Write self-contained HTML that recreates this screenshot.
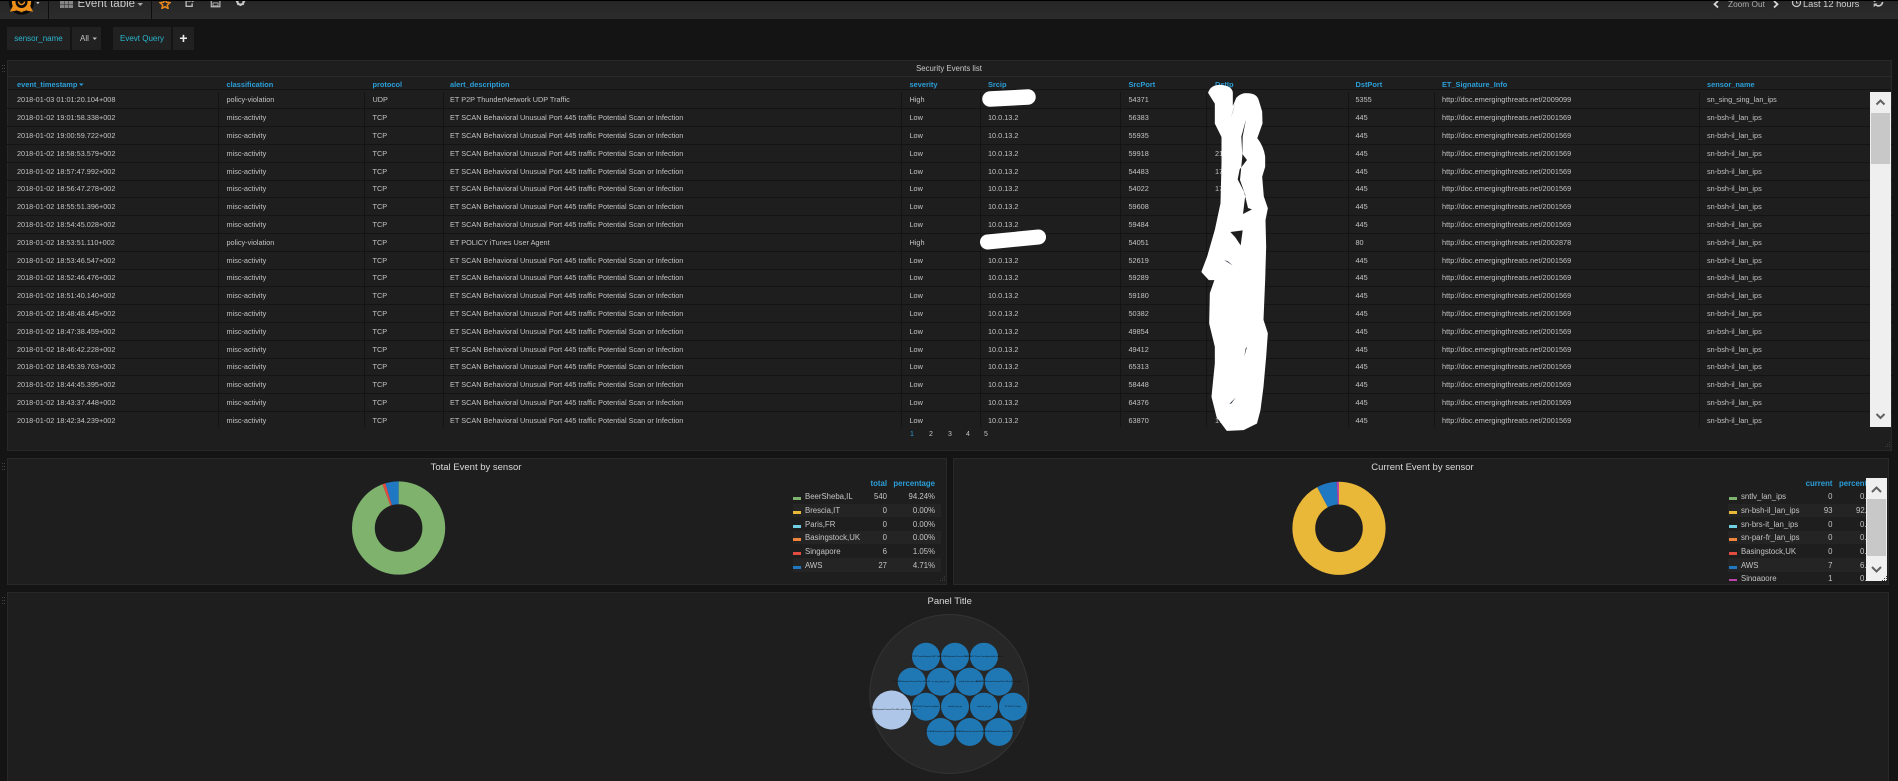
<!DOCTYPE html>
<html><head><meta charset="utf-8"><title>Event table</title>
<style>
html,body{margin:0;padding:0;background:#141414;width:1898px;height:781px;overflow:hidden}
body{position:relative;font-family:"Liberation Sans",sans-serif;color:#c4c4c4}
.a{position:absolute;white-space:nowrap}
.nav{position:absolute;left:0;top:1px;width:1898px;height:18px;background:linear-gradient(#262626,#2c2c2c);overflow:hidden}
.sep{position:absolute;top:0;width:1px;height:19px;background:#0d0d0d}
.btn{position:absolute;top:27px;height:23px;line-height:24px;background:#212121;text-align:center;font-size:8px;color:#2ab7d0}
.panel{position:absolute;background:#1f1e1f;border:1px solid #282828;box-sizing:border-box}
.r{position:absolute;left:0;width:1898px;height:18px;line-height:18px;border-bottom:1px solid #141414;font-size:7.3px;color:#c4c4c4}
.h{position:absolute;top:80px;line-height:10px;font-size:7.4px;font-weight:bold;color:#2a9fd8;white-space:nowrap}
.r span{position:absolute;top:1px;white-space:nowrap}
.c1{left:17px}.c2{left:226.5px}.c3{left:372.5px}.c4{left:450px}.c5{left:909.5px}.c6{left:988px}.c7{left:1128.5px}.c8{left:1215px}.c9{left:1355.5px}.c10{left:1442px;letter-spacing:.05px}.c11{left:1707px}
.v{position:absolute;top:92px;width:1px;height:335px;background:#141414}
.title{position:absolute;font-size:9.5px;color:#d8d9da;white-space:nowrap;transform:translateX(-50%);line-height:12px}
.lg{position:absolute;height:13px;line-height:13px;font-size:7.8px;color:#c4c4c4;white-space:nowrap}
.sw{position:absolute;width:8px;height:2.5px}
.lh{position:absolute;font-size:7.8px;font-weight:bold;color:#2a9fd8;line-height:10px;white-space:nowrap}
.pg{position:absolute;top:429px;font-size:7px;line-height:12px;color:#c4c4c4}
</style></head>
<body>
<div class="a" style="left:0;top:0;width:1898px;height:1px;background:#000"></div>

<div class="nav">
  <svg class="a" style="left:0;top:-1px" width="48" height="19" viewBox="0 0 48 19">
    <circle cx="21.500" cy="2" r="12.700" fill="#0a0a0a"/>
    <circle cx="21.500" cy="2" r="7.800" fill="none" stroke="#ee8f1a" stroke-width="3.600"/>
    <path d="M13 7.500l-1.500 3 3.500-.5zM30 7.500l1.500 3-3.500-.5zM21.500 9.500v2.700" stroke="#ee8f1a" stroke-width="1.800" fill="#ee8f1a"/>
    <path d="M18.500 1.500a3 3 0 0 0 6 0" fill="none" stroke="#ee8f1a" stroke-width="1.400"/>
    <path d="M36.200 2h3.400l-1.700 2.200z" fill="#c8c8c8"/>
  </svg>
  <div class="sep" style="left:48px"></div>
  <svg class="a" style="left:59px;top:-1px" width="15" height="10" viewBox="0 0 15 10"><g fill="#858585"><rect x="1" y="1" width="4" height="3"/><rect x="5.500" y="1" width="4" height="3"/><rect x="10" y="1" width="4" height="3"/><rect x="1" y="4.500" width="4" height="3.500"/><rect x="5.500" y="4.500" width="4" height="3.500"/><rect x="10" y="4.500" width="4" height="3.500"/></g></svg>
  <div class="a" style="left:77.500px;top:-6px;font-size:11.500px;line-height:18px;color:#c8c8c8">Event table</div>
  <svg class="a" style="left:137px;top:1px" width="7" height="5"><path d="M.5 1h5.500l-2.750 3z" fill="#a8a8a8"/></svg>
  <div class="sep" style="left:151px"></div>
  <svg class="a" style="left:159px;top:-3px" width="12" height="11" viewBox="0 0 14 12"><path d="M7 .8l1.700 3.800 4.100.4-3.100 2.800.9 4-3.600-2.100-3.600 2.100.9-4L1.200 5l4.100-.4z" fill="none" stroke="#e8871e" stroke-width="1.800"/></svg>
  <svg class="a" style="left:184px;top:-4px" width="12" height="11" viewBox="0 0 14 12"><path d="M9 4H2.500v6.500h7V7" fill="none" stroke="#b9b9b9" stroke-width="1.600"/><path d="M5.500 6c.3-2.500 2-3.500 4-3.500V.8L13 3.500 9.500 6V4.400C7.800 4.400 6.500 4.800 5.500 6z" fill="#b9b9b9"/></svg>
  <svg class="a" style="left:210px;top:-4px" width="11" height="11" viewBox="0 0 13 12"><path d="M1.500 1h9l1.200 1.200v8.800h-10.200z" fill="none" stroke="#b9b9b9" stroke-width="1.400"/><rect x="3.700" y="1" width="5" height="2.800" fill="#b9b9b9"/><rect x="3.500" y="6.500" width="6" height="3.500" fill="none" stroke="#b9b9b9"/></svg>
  <svg class="a" style="left:235px;top:-4px" width="11" height="11" viewBox="0 0 12 12"><circle cx="6" cy="5" r="3.300" fill="none" stroke="#c9c9c9" stroke-width="2.400"/><path d="M6 .2v1.500M6 8.300v1.500M1 5h1.500M9.500 5H11M2.500 1.500l1 1M8.500 7.500l1 1M9.500 1.500l-1 1M3.500 7.500l-1 1" stroke="#c9c9c9" stroke-width="1.500"/></svg>

  <svg class="a" style="left:1712px;top:-1px" width="8" height="9"><path d="M6 1L2.500 4.200 6 7.500" fill="none" stroke="#d8d8d8" stroke-width="1.800"/></svg>
  <div class="a" style="left:1728px;top:-6px;font-size:8.300px;line-height:18px;color:#adadad">Zoom Out</div>
  <svg class="a" style="left:1772px;top:-1px" width="8" height="9"><path d="M2 1l3.500 3.200L2 7.500" fill="none" stroke="#d8d8d8" stroke-width="1.800"/></svg>
  <svg class="a" style="left:1791px;top:-4px" width="11" height="11" viewBox="0 0 11 11"><circle cx="5.500" cy="5.500" r="4" fill="none" stroke="#c4c4c4" stroke-width="1.300"/><path d="M5.500 3v3h2" fill="none" stroke="#c4c4c4"/></svg>
  <div class="a" style="left:1803px;top:-6px;font-size:9.300px;line-height:18px;color:#cfcfcf">Last 12 hours</div>
  <svg class="a" style="left:1873px;top:-5px" width="11" height="12" viewBox="0 0 11 12"><path d="M1.500 6a4 4 0 0 1 7-2.500M9.500 6a4 4 0 0 1-7 2.500" fill="none" stroke="#c6c6c6" stroke-width="1.700"/><path d="M6.500 4.500h3.800V.8zM4.500 7.500H.7v3.700z" fill="#c6c6c6"/></svg>
</div>

<div class="btn" style="left:7px;width:63px">sensor_name</div>
<div class="btn" style="left:72px;width:29px;color:#c6c6c6;text-align:left;text-indent:8px">All<svg style="position:absolute;left:20px;top:10px" width="6" height="4"><path d="M.5 .5h4.500l-2.250 2.500z" fill="#bbb"/></svg></div>
<div class="btn" style="left:113px;width:58px">Evevt Query</div>
<div class="btn" style="left:173px;width:21px;color:#eee;font-size:14px;font-weight:bold;line-height:22px">+</div>

<svg class="a" style="left:2px;top:65px" width="5" height="9"><g fill="#444"><rect x="0" y="0" width="1" height="1"/><rect x="2" y="0" width="1" height="1"/><rect x="0" y="3" width="1" height="1"/><rect x="2" y="3" width="1" height="1"/><rect x="0" y="6" width="1" height="1"/><rect x="2" y="6" width="1" height="1"/></g></svg>

<!-- security events panel -->
<div class="panel" style="left:7px;top:60px;width:1885px;height:391px"></div>
<div class="a" style="left:8px;top:76px;width:1883px;height:1px;background:#292929"></div>
<div class="a" style="left:8px;top:89px;width:1883px;height:1px;background:#141414"></div>
<div class="a" style="left:0;top:63px;width:1898px;text-align:center;font-size:7.800px;line-height:12px;color:#c9c9c9">Security Events list</div>

<div class="h" style="left:17px">event_timestamp<svg style="margin-left:2px" width="5" height="4"><path d="M0 .5h4.500l-2.250 2.500z" fill="#2a9fd8"/></svg></div>
<div class="h" style="left:226.500px">classification</div>
<div class="h" style="left:372.500px">protocol</div>
<div class="h" style="left:450px">alert_description</div>
<div class="h" style="left:909.500px">severity</div>
<div class="h" style="left:988px">Srcip</div>
<div class="h" style="left:1128.500px">SrcPort</div>
<div class="h" style="left:1215px">DstIp</div>
<div class="h" style="left:1355.500px">DstPort</div>
<div class="h" style="left:1442px">ET_Signature_Info</div>
<div class="h" style="left:1707px">sensor_name</div>

<div class="r" style="top:90px"><span class="c1">2018-01-03 01:01:20.104+008</span><span class="c2">policy-violation</span><span class="c3">UDP</span><span class="c4">ET P2P ThunderNetwork UDP Traffic</span><span class="c5">High</span><span class="c7">54371</span><span class="c9">5355</span><span class="c10">http://doc.emergingthreats.net/2009099</span><span class="c11">sn_sing_sing_lan_ips</span></div>
<div class="r" style="top:108px"><span class="c1">2018-01-02 19:01:58.338+002</span><span class="c2">misc-activity</span><span class="c3">TCP</span><span class="c4">ET SCAN Behavioral Unusual Port 445 traffic Potential Scan or Infection</span><span class="c5">Low</span><span class="c6">10.0.13.2</span><span class="c7">56383</span><span class="c9">445</span><span class="c10">http://doc.emergingthreats.net/2001569</span><span class="c11">sn-bsh-il_lan_ips</span></div>
<div class="r" style="top:126px"><span class="c1">2018-01-02 19:00:59.722+002</span><span class="c2">misc-activity</span><span class="c3">TCP</span><span class="c4">ET SCAN Behavioral Unusual Port 445 traffic Potential Scan or Infection</span><span class="c5">Low</span><span class="c6">10.0.13.2</span><span class="c7">55935</span><span class="c9">445</span><span class="c10">http://doc.emergingthreats.net/2001569</span><span class="c11">sn-bsh-il_lan_ips</span></div>
<div class="r" style="top:144px"><span class="c1">2018-01-02 18:58:53.579+002</span><span class="c2">misc-activity</span><span class="c3">TCP</span><span class="c4">ET SCAN Behavioral Unusual Port 445 traffic Potential Scan or Infection</span><span class="c5">Low</span><span class="c6">10.0.13.2</span><span class="c7">59918</span><span class="c8">21</span><span class="c9">445</span><span class="c10">http://doc.emergingthreats.net/2001569</span><span class="c11">sn-bsh-il_lan_ips</span></div>
<div class="r" style="top:162px"><span class="c1">2018-01-02 18:57:47.992+002</span><span class="c2">misc-activity</span><span class="c3">TCP</span><span class="c4">ET SCAN Behavioral Unusual Port 445 traffic Potential Scan or Infection</span><span class="c5">Low</span><span class="c6">10.0.13.2</span><span class="c7">54483</span><span class="c8">17</span><span class="c9">445</span><span class="c10">http://doc.emergingthreats.net/2001569</span><span class="c11">sn-bsh-il_lan_ips</span></div>
<div class="r" style="top:179px"><span class="c1">2018-01-02 18:56:47.278+002</span><span class="c2">misc-activity</span><span class="c3">TCP</span><span class="c4">ET SCAN Behavioral Unusual Port 445 traffic Potential Scan or Infection</span><span class="c5">Low</span><span class="c6">10.0.13.2</span><span class="c7">54022</span><span class="c8">17</span><span class="c9">445</span><span class="c10">http://doc.emergingthreats.net/2001569</span><span class="c11">sn-bsh-il_lan_ips</span></div>
<div class="r" style="top:197px"><span class="c1">2018-01-02 18:55:51.396+002</span><span class="c2">misc-activity</span><span class="c3">TCP</span><span class="c4">ET SCAN Behavioral Unusual Port 445 traffic Potential Scan or Infection</span><span class="c5">Low</span><span class="c6">10.0.13.2</span><span class="c7">59608</span><span class="c9">445</span><span class="c10">http://doc.emergingthreats.net/2001569</span><span class="c11">sn-bsh-il_lan_ips</span></div>
<div class="r" style="top:215px"><span class="c1">2018-01-02 18:54:45.028+002</span><span class="c2">misc-activity</span><span class="c3">TCP</span><span class="c4">ET SCAN Behavioral Unusual Port 445 traffic Potential Scan or Infection</span><span class="c5">Low</span><span class="c6">10.0.13.2</span><span class="c7">59484</span><span class="c9">445</span><span class="c10">http://doc.emergingthreats.net/2001569</span><span class="c11">sn-bsh-il_lan_ips</span></div>
<div class="r" style="top:233px"><span class="c1">2018-01-02 18:53:51.110+002</span><span class="c2">policy-violation</span><span class="c3">TCP</span><span class="c4">ET POLICY iTunes User Agent</span><span class="c5">High</span><span class="c7">54051</span><span class="c9">80</span><span class="c10">http://doc.emergingthreats.net/2002878</span><span class="c11">sn-bsh-il_lan_ips</span></div>
<div class="r" style="top:251px"><span class="c1">2018-01-02 18:53:46.547+002</span><span class="c2">misc-activity</span><span class="c3">TCP</span><span class="c4">ET SCAN Behavioral Unusual Port 445 traffic Potential Scan or Infection</span><span class="c5">Low</span><span class="c6">10.0.13.2</span><span class="c7">52619</span><span class="c9">445</span><span class="c10">http://doc.emergingthreats.net/2001569</span><span class="c11">sn-bsh-il_lan_ips</span></div>
<div class="r" style="top:268px"><span class="c1">2018-01-02 18:52:46.476+002</span><span class="c2">misc-activity</span><span class="c3">TCP</span><span class="c4">ET SCAN Behavioral Unusual Port 445 traffic Potential Scan or Infection</span><span class="c5">Low</span><span class="c6">10.0.13.2</span><span class="c7">59289</span><span class="c9">445</span><span class="c10">http://doc.emergingthreats.net/2001569</span><span class="c11">sn-bsh-il_lan_ips</span></div>
<div class="r" style="top:286px"><span class="c1">2018-01-02 18:51:40.140+002</span><span class="c2">misc-activity</span><span class="c3">TCP</span><span class="c4">ET SCAN Behavioral Unusual Port 445 traffic Potential Scan or Infection</span><span class="c5">Low</span><span class="c6">10.0.13.2</span><span class="c7">59180</span><span class="c9">445</span><span class="c10">http://doc.emergingthreats.net/2001569</span><span class="c11">sn-bsh-il_lan_ips</span></div>
<div class="r" style="top:304px"><span class="c1">2018-01-02 18:48:48.445+002</span><span class="c2">misc-activity</span><span class="c3">TCP</span><span class="c4">ET SCAN Behavioral Unusual Port 445 traffic Potential Scan or Infection</span><span class="c5">Low</span><span class="c6">10.0.13.2</span><span class="c7">50382</span><span class="c9">445</span><span class="c10">http://doc.emergingthreats.net/2001569</span><span class="c11">sn-bsh-il_lan_ips</span></div>
<div class="r" style="top:322px"><span class="c1">2018-01-02 18:47:38.459+002</span><span class="c2">misc-activity</span><span class="c3">TCP</span><span class="c4">ET SCAN Behavioral Unusual Port 445 traffic Potential Scan or Infection</span><span class="c5">Low</span><span class="c6">10.0.13.2</span><span class="c7">49854</span><span class="c9">445</span><span class="c10">http://doc.emergingthreats.net/2001569</span><span class="c11">sn-bsh-il_lan_ips</span></div>
<div class="r" style="top:340px"><span class="c1">2018-01-02 18:46:42.228+002</span><span class="c2">misc-activity</span><span class="c3">TCP</span><span class="c4">ET SCAN Behavioral Unusual Port 445 traffic Potential Scan or Infection</span><span class="c5">Low</span><span class="c6">10.0.13.2</span><span class="c7">49412</span><span class="c9">445</span><span class="c10">http://doc.emergingthreats.net/2001569</span><span class="c11">sn-bsh-il_lan_ips</span></div>
<div class="r" style="top:357px"><span class="c1">2018-01-02 18:45:39.763+002</span><span class="c2">misc-activity</span><span class="c3">TCP</span><span class="c4">ET SCAN Behavioral Unusual Port 445 traffic Potential Scan or Infection</span><span class="c5">Low</span><span class="c6">10.0.13.2</span><span class="c7">65313</span><span class="c9">445</span><span class="c10">http://doc.emergingthreats.net/2001569</span><span class="c11">sn-bsh-il_lan_ips</span></div>
<div class="r" style="top:375px"><span class="c1">2018-01-02 18:44:45.395+002</span><span class="c2">misc-activity</span><span class="c3">TCP</span><span class="c4">ET SCAN Behavioral Unusual Port 445 traffic Potential Scan or Infection</span><span class="c5">Low</span><span class="c6">10.0.13.2</span><span class="c7">58448</span><span class="c9">445</span><span class="c10">http://doc.emergingthreats.net/2001569</span><span class="c11">sn-bsh-il_lan_ips</span></div>
<div class="r" style="top:393px"><span class="c1">2018-01-02 18:43:37.448+002</span><span class="c2">misc-activity</span><span class="c3">TCP</span><span class="c4">ET SCAN Behavioral Unusual Port 445 traffic Potential Scan or Infection</span><span class="c5">Low</span><span class="c6">10.0.13.2</span><span class="c7">64376</span><span class="c9">445</span><span class="c10">http://doc.emergingthreats.net/2001569</span><span class="c11">sn-bsh-il_lan_ips</span></div>
<div class="r" style="top:411px;border-bottom:none"><span class="c1">2018-01-02 18:42:34.239+002</span><span class="c2">misc-activity</span><span class="c3">TCP</span><span class="c4">ET SCAN Behavioral Unusual Port 445 traffic Potential Scan or Infection</span><span class="c5">Low</span><span class="c6">10.0.13.2</span><span class="c7">63870</span><span class="c8">17</span><span class="c9">445</span><span class="c10">http://doc.emergingthreats.net/2001569</span><span class="c11">sn-bsh-il_lan_ips</span></div>

<div class="v" style="left:218px"></div><div class="v" style="left:364px"></div><div class="v" style="left:443px"></div><div class="v" style="left:901px"></div><div class="v" style="left:980px"></div><div class="v" style="left:1120px"></div><div class="v" style="left:1206px"></div><div class="v" style="left:1348px"></div><div class="v" style="left:1434px"></div><div class="v" style="left:1699px"></div>

<div class="pg" style="left:910px;color:#2a9fd8">1</div><div class="pg" style="left:929px">2</div><div class="pg" style="left:948px">3</div><div class="pg" style="left:966px">4</div><div class="pg" style="left:984px">5</div>

<!-- table scrollbar -->
<svg class="a" style="left:1870px;top:92px" width="21" height="335" viewBox="0 0 21 335">
  <rect width="21" height="335" fill="#efefef"/>
  <rect x="1" y="21" width="19" height="51" fill="#c8c8c8"/>
  <path d="M6.500 12.500l4-4 4 4" fill="none" stroke="#606060" stroke-width="2"/>
  <path d="M6.500 322l4 4 4-4" fill="none" stroke="#606060" stroke-width="2"/>
</svg>

<!-- redaction scribbles -->
<svg class="a" style="left:0;top:0" width="1898" height="781" viewBox="0 0 1898 781">
  <path d="M990 99L1028 97" fill="none" stroke="#fff" stroke-width="15.500" stroke-linecap="round"/>
  <path d="M987.500 242L1038.500 237" fill="none" stroke="#fff" stroke-width="15" stroke-linecap="round"/>
  <g transform="translate(1100 80) scale(.33333)">
    <path d="M328 38Q335 18 360 18Q393 20 395 38L395 95L412 55Q425 42 440 43Q468 43 473 62L483 95L484 130L468 175Q488 200 492 230L492 260L483 290L488 350L500 385L493 420L495 500L492 600L487 720L500 760L495 830L487 920L478 990L468 1028L430 1047L382 1049L353 1010L338 950L348 850L348 800L331 730L333 640L348 597L328 597L308 575L325 530L348 450L365 370L368 250L368 170L348 130L348 70Z" fill="#fff" stroke="#fff" stroke-width="7" stroke-linejoin="round"/>
    <path d="M407 66L393 112L399 94Z" fill="#1f1e1f"/>
    <path d="M438 118L428 170L427 222L441 240L419 268L413 298L432 335L444 384L456 388L429 402L436 345L420 300L427 228L424 170Z" fill="#1f1e1f"/>
    <path d="M391 456L428 451L422 496L406 472Z" fill="#1f1e1f"/>
    <path d="M372 540L398 556L384 544Z" fill="#334"/>
    <path d="M441 800L433 830L437 806Z" fill="#1f1e1f"/>
    <path d="M407 953L388 972L394 970Z" fill="#123"/>
  </g>
</svg>

<!-- total event panel -->
<svg class="a" style="left:2px;top:463px" width="5" height="9"><g fill="#444"><rect x="0" y="0" width="1" height="1"/><rect x="2" y="0" width="1" height="1"/><rect x="0" y="3" width="1" height="1"/><rect x="2" y="3" width="1" height="1"/><rect x="0" y="6" width="1" height="1"/><rect x="2" y="6" width="1" height="1"/></g></svg>
<div class="panel" style="left:7px;top:458px;width:940px;height:127px"></div>
<div class="title" style="left:476px;top:462px">Total Event by sensor</div>
<svg class="a" style="left:340px;top:470px" width="118" height="116" viewBox="0 0 118 116">
  <g transform="rotate(-90 58.600 58)" fill="none" stroke-width="22.800">
    <circle cx="58.600" cy="58" r="35.200" stroke="#7eb26d" stroke-dasharray="208.400 300"/>
    <circle cx="58.600" cy="58" r="35.200" stroke="#e24d42" stroke-dasharray="2.320 300" stroke-dashoffset="-208.400"/>
    <circle cx="58.600" cy="58" r="35.200" stroke="#1f78c1" stroke-dasharray="10.420 300" stroke-dashoffset="-210.720"/>
  </g>
</svg>
<div class="lh" style="right:1011px;top:479px">total</div>
<div class="lh" style="right:963px;top:479px">percentage</div>
<div class="a" style="left:793px;top:504px;width:148px;height:13px;background:#242424"></div>
<div class="a" style="left:793px;top:531px;width:148px;height:13px;background:#242424"></div>
<div class="a" style="left:793px;top:558px;width:148px;height:14px;background:#242424"></div>
<div class="sw" style="left:793px;top:497px;background:#7eb26d"></div><div class="lg" style="left:805px;top:490px">BeerSheba,IL</div><div class="lg" style="right:1011px;top:490px">540</div><div class="lg" style="right:963px;top:490px">94.24%</div>
<div class="sw" style="left:793px;top:511px;background:#eab839"></div><div class="lg" style="left:805px;top:504px">Brescia,IT</div><div class="lg" style="right:1011px;top:504px">0</div><div class="lg" style="right:963px;top:504px">0.00%</div>
<div class="sw" style="left:793px;top:525px;background:#6ed0e0"></div><div class="lg" style="left:805px;top:518px">Paris,FR</div><div class="lg" style="right:1011px;top:518px">0</div><div class="lg" style="right:963px;top:518px">0.00%</div>
<div class="sw" style="left:793px;top:538px;background:#ef843c"></div><div class="lg" style="left:805px;top:531px">Basingstock,UK</div><div class="lg" style="right:1011px;top:531px">0</div><div class="lg" style="right:963px;top:531px">0.00%</div>
<div class="sw" style="left:793px;top:552px;background:#e24d42"></div><div class="lg" style="left:805px;top:545px">Singapore</div><div class="lg" style="right:1011px;top:545px">6</div><div class="lg" style="right:963px;top:545px">1.05%</div>
<div class="sw" style="left:793px;top:566px;background:#1f78c1"></div><div class="lg" style="left:805px;top:559px">AWS</div><div class="lg" style="right:1011px;top:559px">27</div><div class="lg" style="right:963px;top:559px">4.71%</div>

<!-- current event panel -->
<div class="panel" style="left:953px;top:458px;width:936px;height:127px"></div>
<div class="title" style="left:1422.500px;top:462px">Current Event by sensor</div>
<svg class="a" style="left:1280px;top:470px" width="118" height="116" viewBox="0 0 118 116">
  <g transform="rotate(-90 59 58.300)" fill="none" stroke-width="22.800">
    <circle cx="59" cy="58.300" r="35.200" stroke="#eab839" stroke-dasharray="203.650 300"/>
    <circle cx="59" cy="58.300" r="35.200" stroke="#1f78c1" stroke-dasharray="15.330 300" stroke-dashoffset="-203.650"/>
    <circle cx="59" cy="58.300" r="35.200" stroke="#ba43a9" stroke-dasharray="2.190 300" stroke-dashoffset="-218.980"/>
  </g>
</svg>
<div class="a" style="left:1725px;top:478px;width:141px;height:103px;overflow:hidden">
  <div class="lh" style="right:33.500px;top:1px">current</div>
  <div class="lh" style="left:114px;top:1px">percentage</div>
  <div class="a" style="left:3px;top:26px;width:138px;height:13px;background:#242424"></div>
  <div class="a" style="left:3px;top:53px;width:138px;height:13px;background:#242424"></div>
  <div class="a" style="left:3px;top:80px;width:138px;height:14px;background:#242424"></div>
  <div class="sw" style="left:3.500px;top:19px;background:#7eb26d"></div><div class="lg" style="left:16px;top:12px">sntlv_lan_ips</div><div class="lg" style="right:33.500px;top:12px">0</div><div class="lg" style="left:135px;top:12px">0.00%</div>
  <div class="sw" style="left:3.500px;top:33px;background:#eab839"></div><div class="lg" style="left:16px;top:26px">sn-bsh-il_lan_ips</div><div class="lg" style="right:33.500px;top:26px">93</div><div class="lg" style="left:131px;top:26px">92.08%</div>
  <div class="sw" style="left:3.500px;top:47px;background:#6ed0e0"></div><div class="lg" style="left:16px;top:40px">sn-brs-it_lan_ips</div><div class="lg" style="right:33.500px;top:40px">0</div><div class="lg" style="left:135px;top:40px">0.00%</div>
  <div class="sw" style="left:3.500px;top:60px;background:#ef843c"></div><div class="lg" style="left:16px;top:53px">sn-par-fr_lan_ips</div><div class="lg" style="right:33.500px;top:53px">0</div><div class="lg" style="left:135px;top:53px">0.00%</div>
  <div class="sw" style="left:3.500px;top:74px;background:#e24d42"></div><div class="lg" style="left:16px;top:67px">Basingstock,UK</div><div class="lg" style="right:33.500px;top:67px">0</div><div class="lg" style="left:135px;top:67px">0.00%</div>
  <div class="sw" style="left:3.500px;top:88px;background:#1f78c1"></div><div class="lg" style="left:16px;top:81px">AWS</div><div class="lg" style="right:33.500px;top:81px">7</div><div class="lg" style="left:135px;top:81px">6.93%</div>
  <div class="sw" style="left:3.500px;top:101px;background:#ba43a9"></div><div class="lg" style="left:16px;top:94px">Singapore</div><div class="lg" style="right:33.500px;top:94px">1</div><div class="lg" style="left:135px;top:94px">0.99%</div>
</div>
<svg class="a" style="left:1866px;top:478px" width="21" height="103" viewBox="0 0 21 103">
  <rect width="21" height="103" fill="#efefef"/>
  <rect x="1" y="21" width="19" height="57" fill="#c8c8c8"/>
  <path d="M6 14l4.500-4.500 4.500 4.500" fill="none" stroke="#606060" stroke-width="2"/>
  <path d="M6 89l4.500 4.500 4.500-4.500" fill="none" stroke="#606060" stroke-width="2"/>
</svg>

<!-- panel title -->
<svg class="a" style="left:2px;top:597px" width="5" height="9"><g fill="#444"><rect x="0" y="0" width="1" height="1"/><rect x="2" y="0" width="1" height="1"/><rect x="0" y="3" width="1" height="1"/><rect x="2" y="3" width="1" height="1"/><rect x="0" y="6" width="1" height="1"/><rect x="2" y="6" width="1" height="1"/></g></svg>
<div class="panel" style="left:7px;top:592px;width:1882px;height:195px"></div>
<div class="title" style="left:949.700px;top:596px">Panel Title</div>
<svg class="a" style="left:840px;top:590px" width="220" height="191" viewBox="840 590 220 191">
  <circle cx="949.300" cy="694" r="79.500" fill="#272727" stroke="#343434"/>
  <g fill="#1f77b4">
    <circle cx="926" cy="656.700" r="14"/><circle cx="955" cy="656.700" r="14"/><circle cx="984" cy="656.700" r="14"/>
    <circle cx="911.700" cy="681.700" r="14"/><circle cx="940.700" cy="681.700" r="14"/><circle cx="969.700" cy="681.700" r="14"/><circle cx="998.700" cy="681.700" r="14"/>
    <circle cx="926" cy="706.700" r="14"/><circle cx="955" cy="706.700" r="14"/><circle cx="984" cy="706.700" r="14"/><circle cx="1013" cy="706.700" r="14"/>
    <circle cx="940.700" cy="732" r="14"/><circle cx="969.700" cy="732" r="14"/><circle cx="998.700" cy="732" r="14"/>
  </g>
  <circle cx="891.700" cy="710" r="19.500" fill="#aec7e8"/>
  <g font-family="Liberation Sans" font-size="1.900" fill="#111" text-anchor="middle">
    <text x="926" y="657">ET P2P ThunderNetwork UDP Traffic</text><text x="955" y="657">ET SCAN Behavioral Unusual Port 445</text><text x="984" y="657">ET POLICY iTunes User Agent traffic detected</text>
    <text x="911.700" y="682">ET SCAN Behavioral Unusual Port 445 traffic</text><text x="940.700" y="682">sn_sing_sing_lan_ips</text><text x="969.700" y="682">sn-bsh-il_lan_ips sn-bsh-il</text><text x="998.700" y="682">ET SCAN Behavioral Unusual Port 445 traffic Potential</text>
    <text x="926" y="707">ET POLICY iTunes User Agent</text><text x="955" y="707">sn-bsh-il_lan_ips</text><text x="984" y="707">sn-bsh-il_lan_ips</text><text x="1013" y="707">ET POLICY iTunes</text>
    <text x="940.700" y="732">ET SCAN Behavioral Unusual Port 445</text><text x="969.700" y="732">ET SCAN Behavioral Unusual Port 445</text><text x="998.700" y="732">ET SCAN Behavioral Unusual Port 445</text>
    <text x="891.700" y="710">ET SCAN Behavioral Unusual Port 445 traffic Potential Scan</text>
  </g>
</svg>

<!-- resize handles -->
<svg class="a" style="left:1883px;top:441px" width="8" height="8"><g fill="#3c3c3c"><rect x="6" y="1" width="1" height="1"/><rect x="4" y="3" width="1" height="1"/><rect x="6" y="3" width="1" height="1"/><rect x="2" y="5" width="1" height="1"/><rect x="4" y="5" width="1" height="1"/><rect x="6" y="5" width="1" height="1"/></g></svg>
<svg class="a" style="left:938px;top:575px" width="8" height="8"><g fill="#3c3c3c"><rect x="6" y="1" width="1" height="1"/><rect x="4" y="3" width="1" height="1"/><rect x="6" y="3" width="1" height="1"/><rect x="2" y="5" width="1" height="1"/><rect x="4" y="5" width="1" height="1"/><rect x="6" y="5" width="1" height="1"/></g></svg>
<svg class="a" style="left:1880px;top:575px" width="8" height="8"><g fill="#3c3c3c"><rect x="6" y="1" width="1" height="1"/><rect x="4" y="3" width="1" height="1"/><rect x="6" y="3" width="1" height="1"/><rect x="2" y="5" width="1" height="1"/><rect x="4" y="5" width="1" height="1"/><rect x="6" y="5" width="1" height="1"/></g></svg>
</body></html>
